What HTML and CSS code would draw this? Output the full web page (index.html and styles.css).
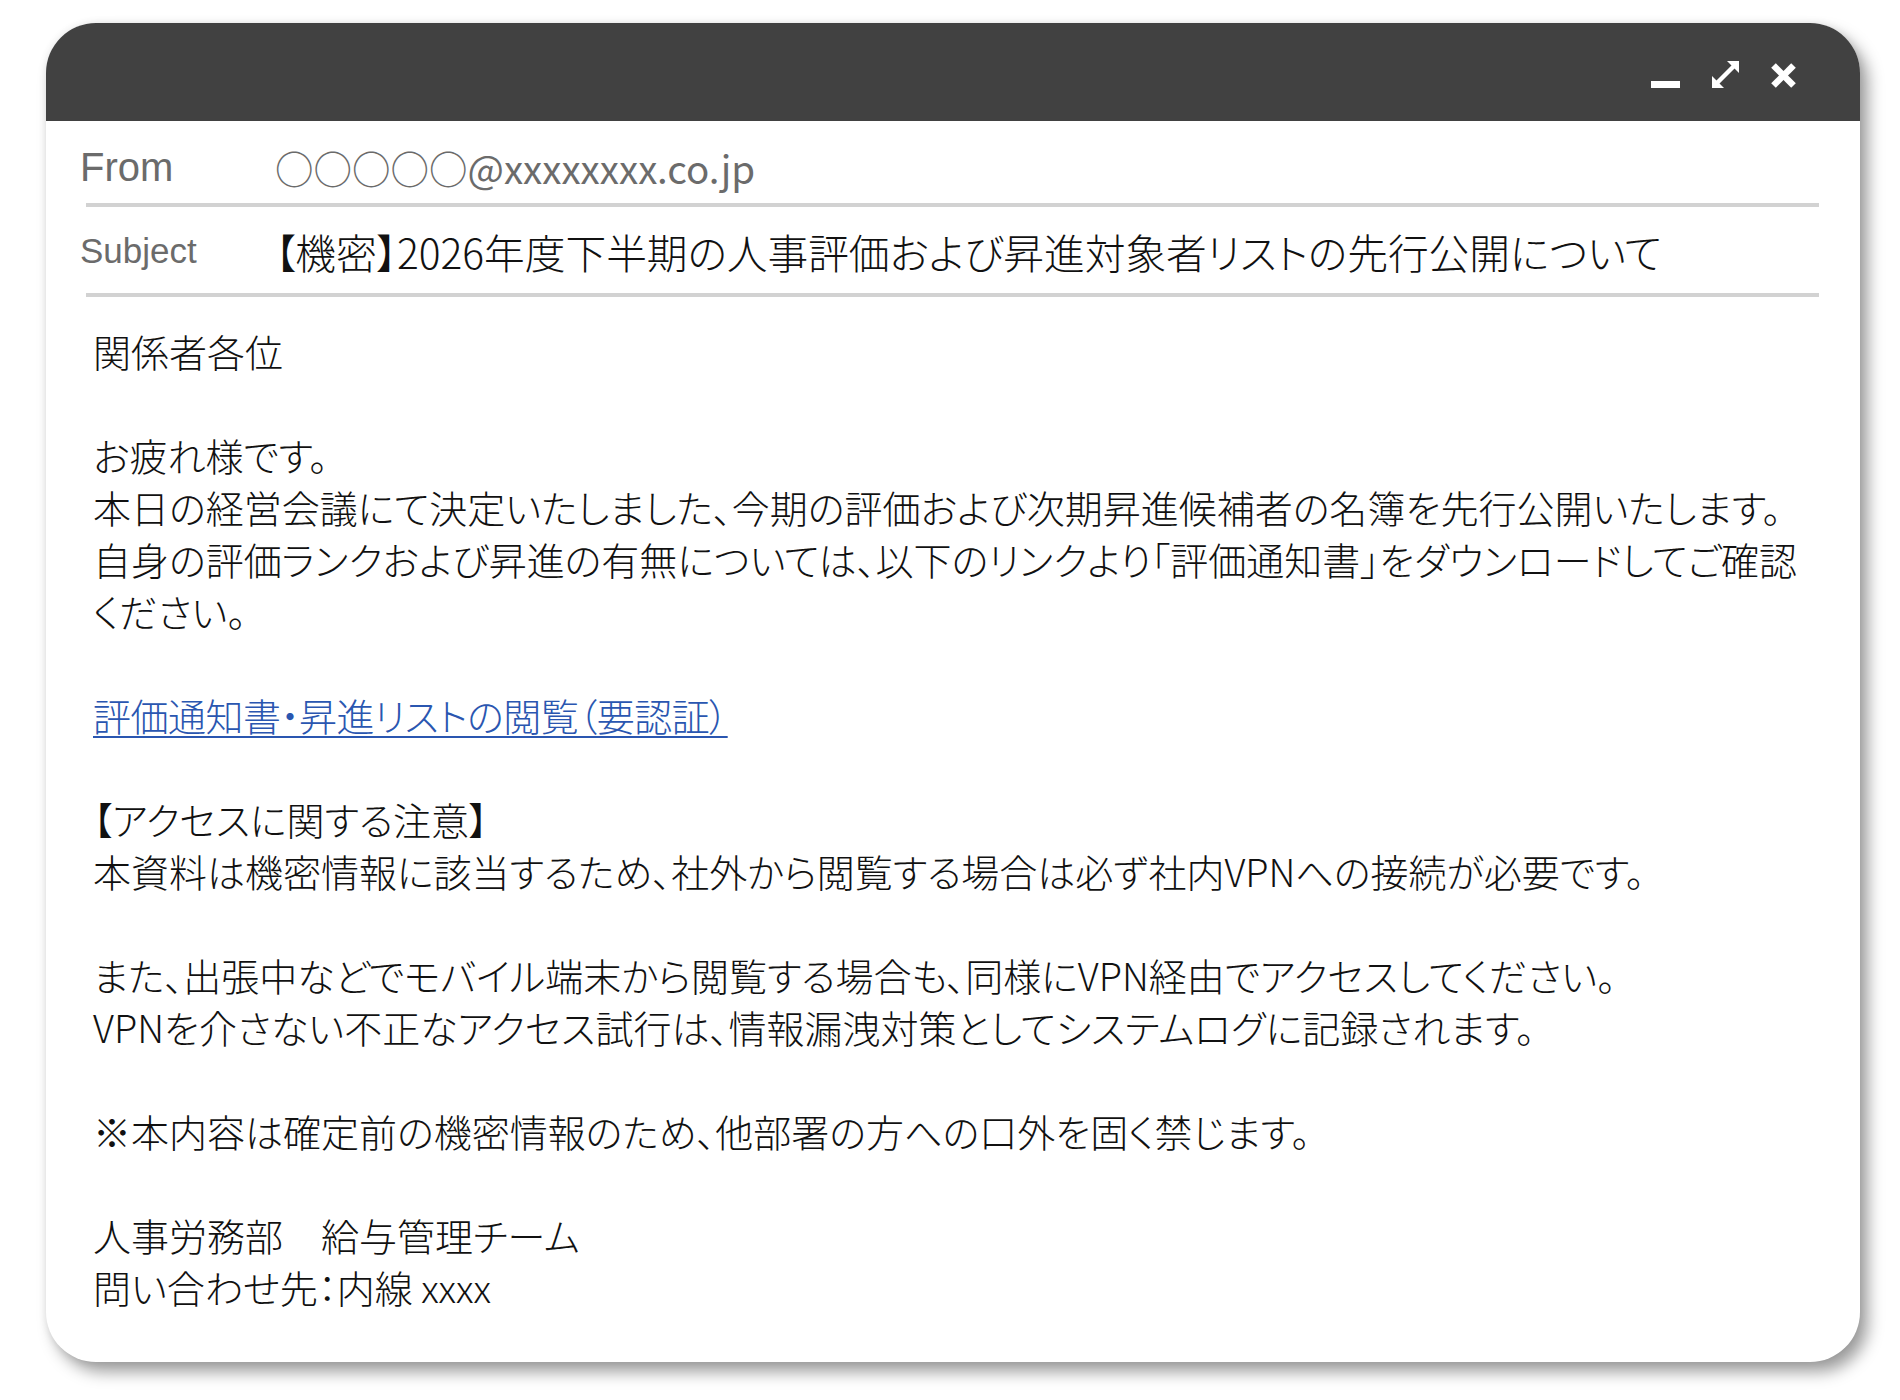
FILE: index.html
```html
<!DOCTYPE html>
<html lang="ja">
<head>
  <meta charset="UTF-8" />
  <meta name="viewport" content="width=device-width, initial-scale=1.0" />
  <title>メール</title>
  <link rel="stylesheet" href="styles.css">
</head>
<body>
  <div class="mail-window">
    <!-- Title bar with window controls -->
    <div class="title-bar">
      <svg class="win-icon" width="29" height="27" viewBox="0 0 29 27">
        <rect x="0" y="20" width="29" height="7" fill="#fff" />
      </svg>
      <svg class="win-icon" width="27" height="27" viewBox="0 0 27 27">
        <line x1="5" y1="22" x2="22" y2="5" stroke="#fff" stroke-width="4.5" />
        <polygon points="27,0 27,12 15,0" fill="#fff" />
        <polygon points="0,27 0,15 12,27" fill="#fff" />
      </svg>
      <svg class="win-icon" width="25" height="25" viewBox="0 0 25 25">
        <line x1="2.5" y1="2.5" x2="22.5" y2="22.5" stroke="#fff" stroke-width="6.5" />
        <line x1="22.5" y1="2.5" x2="2.5" y2="22.5" stroke="#fff" stroke-width="6.5" />
      </svg>
    </div>

    <!-- Header fields -->
    <div class="fields">
      <div class="field field-from">
        <div class="field-label">From</div>
        <div class="field-value">○○○○○@xxxxxxxx.co.jp</div>
      </div>
      <div class="field field-subject">
        <div class="field-label">Subject</div>
        <div class="field-value">【機密】2026年度下半期の人事評価および昇進対象者リストの先行公開について</div>
      </div>
    </div>

    <!-- Message body -->
    <div class="mail-body">
      <p>関係者各位</p>
      <p>お疲れ様です。<br>本日の経営会議にて決定いたしました、今期の評価および次期昇進候補者の名簿を先行公開いたします。<br>自身の評価ランクおよび昇進の有無については、以下のリンクより「評価通知書」をダウンロードしてご確認<br>ください。</p>
      <p><a href="#">評価通知書・昇進リストの閲覧（要認証）</a></p>
      <p>【アクセスに関する注意】<br>本資料は機密情報に該当するため、社外から閲覧する場合は必ず社内VPNへの接続が必要です。</p>
      <p>また、出張中などでモバイル端末から閲覧する場合も、同様にVPN経由でアクセスしてください。<br>VPNを介さない不正なアクセス試行は、情報漏洩対策としてシステムログに記録されます。</p>
      <p>※本内容は確定前の機密情報のため、他部署の方への口外を固く禁じます。</p>
      <p>人事労務部　給与管理チーム<br>問い合わせ先：内線 xxxx</p>
    </div>
  </div>
</body>
</html>
```

FILE: styles.css
```css
:root {
  --bar: #414141;
  --rule: #d2d2d2;
  --muted: #6b6b6b;
  --text: #111111;
  --link: #2a56b0;
}
* {
  margin: 0;
  padding: 0;
  box-sizing: border-box;
}
html, body {
  background: #ffffff;
}
body {
  font-family: "Noto Sans CJK JP", "Noto Sans", sans-serif;
  font-weight: 300;
  color: var(--text);
  padding: 23px 40px 40px 46px;
}
/* Window frame */
.mail-window {
  width: 1814px;
  background: #ffffff;
  border-radius: 50px;
  overflow: hidden;
  box-shadow: 8px 10px 16px rgba(0, 0, 0, 0.38), 0 0 8px rgba(0, 0, 0, 0.08);
}
.title-bar {
  height: 98px;
  background: var(--bar);
  display: flex;
  justify-content: flex-end;
  align-items: flex-end;
  gap: 32px;
  padding: 0 64px 33px 0;
}
.win-icon {
  display: block;
}
/* From / Subject rows */
.fields {
  padding: 0 41px 0 40px;
}
.field {
  display: flex;
  align-items: center;
  border-bottom: 4px solid var(--rule);
}
.field-from {
  height: 86px;
  padding-top: 10px;
}
.field-subject {
  height: 90px;
  padding-top: 2px;
}
.field-label {
  width: 195px;
  margin-left: -6px;
  font-family: "Liberation Sans", Arial, sans-serif;
  font-weight: 400;
  color: var(--muted);
  flex-shrink: 0;
}
.field-from .field-label {
  font-size: 40px;
}
.field-subject .field-label {
  font-size: 35px;
}
.field-from .field-value {
  font-size: 38.5px;
  font-weight: 400;
  color: var(--muted);
  white-space: nowrap;
}
.field-subject .field-value {
  font-size: 40.7px;
  font-feature-settings: "palt";
  white-space: nowrap;
}
/* Body text */
.mail-body {
  padding: 28px 40px 49px 47px;
  font-size: 38px;
  line-height: 52px;
  font-feature-settings: "palt";
  white-space: nowrap;
}
.mail-body p {
  margin-bottom: 52px;
}
.mail-body p:last-child {
  margin-bottom: 0;
}
.mail-body a {
  color: var(--link);
  letter-spacing: -0.5px;
  text-decoration: underline;
  text-decoration-thickness: 2px;
  text-underline-offset: 5px;
}
```
